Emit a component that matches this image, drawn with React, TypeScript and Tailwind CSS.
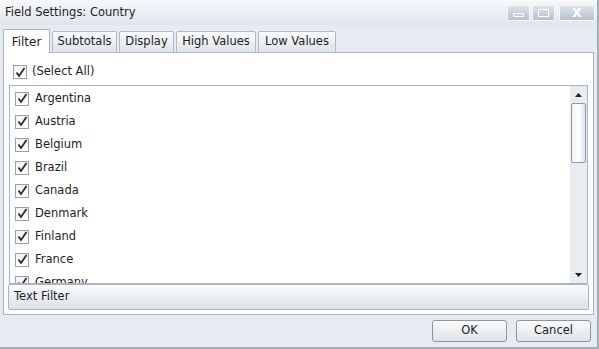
import React from "react";

const font = { fontFamily: '"DejaVu Sans", Verdana, sans-serif' };

function Check() {
  return (
    <span className="flex h-[14px] w-[14px] shrink-0 items-center justify-center border border-[#9aa0a7] bg-gradient-to-b from-[#f2f2f2] to-[#ffffff]">
      <svg width="11" height="11" viewBox="0 0 11 11">
        <path d="M1.5 5.5 L4 9 L9.5 1" fill="none" stroke="#2b2b2b" strokeWidth="1.8" />
      </svg>
    </span>
  );
}

const countries = ["Argentina", "Austria", "Belgium", "Brazil", "Canada", "Denmark", "Finland", "France", "Germany"];
const tabs = [
  { label: "Subtotals", w: "w-[65px]" },
  { label: "Display", w: "w-[55px]" },
  { label: "High Values", w: "w-[80px]" },
  { label: "Low Values", w: "w-[78px]" },
];

export default function App() {
  return (
    <div
      className="flex h-[349px] w-[599px] flex-col overflow-hidden border-r-2 border-b-2 border-[#a5adb6] bg-[#e6ebf1] text-[11.5px] text-[#1e1e1e]"
      style={font}
    >
      {/* title bar */}
      <div className="flex h-[25px] shrink-0 items-center justify-between bg-gradient-to-b from-[#f7f9fb] to-[#dfe5ec] pl-[5px] pr-[2px]">
        <span className="text-[11.5px]">Field Settings: Country</span>
        <div className="flex items-center gap-[2px]">
          <div className="flex h-[16px] w-[23px] items-center justify-center rounded-[2px] border border-[#f4f6f8] bg-gradient-to-b from-[#dde3ea] to-[#b7c2cf]">
            <span className="mt-[4px] h-[4px] w-[11px] border border-white bg-[#c8d0da]" />
          </div>
          <div className="flex h-[16px] w-[23px] items-center justify-center rounded-[2px] border border-[#f4f6f8] bg-gradient-to-b from-[#dde3ea] to-[#b7c2cf]">
            <span className="h-[8px] w-[11px] border border-white" />
          </div>
          <div className="ml-[2px] flex h-[16px] w-[36px] items-center justify-center rounded-[2px] border border-[#f4f6f8] bg-gradient-to-b from-[#dde3ea] to-[#b7c2cf] text-[12px] font-bold text-white">
            X
          </div>
        </div>
      </div>

      {/* tabs */}
      <div className="relative z-10 mt-[4px] flex h-[24px] items-end pl-[3px]">
        <div className="flex h-[24px] w-[47px] items-center justify-center rounded-t-[2px] border border-b-0 border-[#a9b4c0] bg-white text-[12px]">
          Filter
        </div>
        {tabs.map((t) => (
          <div
            key={t.label}
            className={`ml-[2px] flex h-[22px] ${t.w} items-center justify-center rounded-t-[2px] border border-[#b0bac5] bg-gradient-to-b from-[#fbfcfd] to-[#dde3ea]`}
          >
            {t.label}
          </div>
        ))}
      </div>

      {/* content panel */}
      <div className="mx-[3px] -mt-px flex h-[263px] flex-col border border-[#a9b4c0] bg-white px-[5px]">
        <div className="flex h-[32px] items-center gap-[5px] pl-[4px] pt-[6px]">
          <Check />
          <span>(Select All)</span>
        </div>
        <div className="flex h-[199px] border border-[#a9b4c0]">
          <div className="flex-1 overflow-hidden">
            {countries.map((c) => (
              <div key={c} className="flex h-[23px] items-center gap-[6px] pl-[5px] first:mt-[1px]">
                <Check />
                <span>{c}</span>
              </div>
            ))}
          </div>
          <div className="flex w-[17px] flex-col items-center bg-[#e9edf2]">
            <div className="flex h-[17px] items-center justify-center">
              <svg width="7" height="4" viewBox="0 0 7 4">
                <path d="M0 4 L3.5 0 L7 4 Z" fill="#222" />
              </svg>
            </div>
            <div className="h-[60px] w-[15px] rounded-[2px] border border-[#8e99a6] bg-gradient-to-r from-[#eef1f4] via-[#ffffff] to-[#dfe4ea]" />
            <div className="flex-1" />
            <div className="flex h-[17px] items-center justify-center">
              <svg width="7" height="4" viewBox="0 0 7 4">
                <path d="M0 0 L7 0 L3.5 4 Z" fill="#222" />
              </svg>
            </div>
          </div>
        </div>
        <div className="-mx-[1px] flex h-[26px] items-center rounded-[2px] border border-[#a9b4c0] bg-gradient-to-b from-[#fafbfc] to-[#dce2e9] pl-[5px]">
          Text Filter
        </div>
      </div>

      {/* footer */}
      <div className="flex flex-1 items-start justify-end gap-[9px] pr-[6px] pt-[5px]">
        <button className="h-[22px] w-[75px] rounded-[3px] border border-[#8e96a0] bg-gradient-to-b from-[#fbfbfc] to-[#dfe3e8]">
          OK
        </button>
        <button className="h-[22px] w-[75px] rounded-[3px] border border-[#8e96a0] bg-gradient-to-b from-[#fbfbfc] to-[#dfe3e8]">
          Cancel
        </button>
      </div>
    </div>
  );
}
